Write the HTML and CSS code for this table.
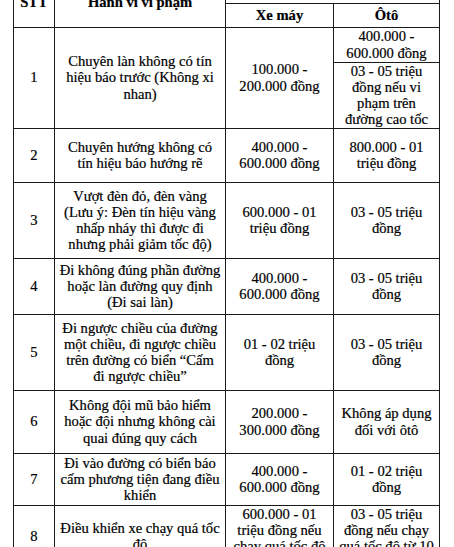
FILE: index.html
```html
<!DOCTYPE html>
<html lang="vi">
<head>
<meta charset="utf-8">
<link rel="stylesheet" href="styles.css">
</head>
<body>
<table class="fines">
  <colgroup>
    <col class="c-stt">
    <col class="c-act">
    <col class="c-moto">
    <col class="c-car">
  </colgroup>
  <thead>
    <tr class="h-a">
      <th rowspan="2">STT</th>
      <th rowspan="2">Hành vi vi phạm</th>
      <th colspan="2">Mức phạt</th>
    </tr>
    <tr class="h-b">
      <th>Xe máy</th>
      <th>Ôtô</th>
    </tr>
  </thead>
  <tbody>
    <tr class="r1a">
      <td rowspan="2">1</td>
      <td rowspan="2">Chuyên làn không có tín<br>hiệu báo trước (Không xi<br>nhan)</td>
      <td rowspan="2">100.000 -<br>200.000 đồng</td>
      <td>400.000 -<br>600.000 đồng</td>
    </tr>
    <tr class="r1b">
      <td>03 - 05 triệu<br>đồng nếu vi<br>phạm trên<br>đường cao tốc</td>
    </tr>
    <tr class="r2">
      <td>2</td>
      <td>Chuyên hướng không có<br>tín hiệu báo hướng rẽ</td>
      <td>400.000 -<br>600.000 đồng</td>
      <td>800.000 - 01<br>triệu đồng</td>
    </tr>
    <tr class="r3">
      <td>3</td>
      <td>Vượt đèn đỏ, đèn vàng<br>(Lưu ý: Đèn tín hiệu vàng<br>nhấp nháy thì được đi<br>nhưng phải giảm tốc độ)</td>
      <td>600.000 - 01<br>triệu đồng</td>
      <td>03 - 05 triệu<br>đồng</td>
    </tr>
    <tr class="r4">
      <td>4</td>
      <td>Đi không đúng phần đường<br>hoặc làn đường quy định<br>(Đi sai làn)</td>
      <td>400.000 -<br>600.000 đồng</td>
      <td>03 - 05 triệu<br>đồng</td>
    </tr>
    <tr class="r5">
      <td>5</td>
      <td>Đi ngược chiều của đường<br>một chiều, đi ngược chiều<br>trên đường có biển “Cấm<br>đi ngược chiều”</td>
      <td>01 - 02 triệu<br>đồng</td>
      <td>03 - 05 triệu<br>đồng</td>
    </tr>
    <tr class="r6">
      <td>6</td>
      <td>Không đội mũ bảo hiểm<br>hoặc đội nhưng không cài<br>quai đúng quy cách</td>
      <td>200.000 -<br>300.000 đồng</td>
      <td>Không áp dụng<br>đối với ôtô</td>
    </tr>
    <tr class="r7">
      <td>7</td>
      <td>Đi vào đường có biển báo<br>cấm phương tiện đang điều<br>khiển</td>
      <td>400.000 -<br>600.000 đồng</td>
      <td>01 - 02 triệu<br>đồng</td>
    </tr>
    <tr class="r8">
      <td class="lift">8</td>
      <td class="lift">Điều khiển xe chạy quá tốc<br>độ</td>
      <td class="top">600.000 - 01<br>triệu đồng nếu<br>chạy quá tốc độ<br>từ 10 - 20 km/h</td>
      <td class="top">03 - 05 triệu<br>đồng nếu chạy<br>quá tốc độ từ 10<br>- 20 km/h</td>
    </tr>
  </tbody>
</table>
</body>
</html>
```

FILE: styles.css
```css
html, body {
  margin: 0;
  padding: 0;
  background: #ffffff;
}

body {
  width: 454px;
  height: 547px;
  overflow: hidden;
}

.fines {
  margin: -23.5px 0 0 13px;
  width: 426px;
  border-collapse: collapse;
  table-layout: fixed;
  font-family: "Liberation Serif", "Times New Roman", serif;
  font-size: 14.6px;
  line-height: 16.2px;
  color: #000000;
  -webkit-text-stroke: 0.2px #000000;
}

.c-stt { width: 41px; }
.c-act { width: 171px; }
.c-moto { width: 108px; }
.c-car { width: 106px; }

.fines th,
.fines td {
  border: 1px solid #1a1a1a;
  padding: 0 2px;
  text-align: center;
  vertical-align: middle;
  white-space: nowrap;
}

.fines th {
  font-weight: bold;
}

.h-a { height: 26px; }
.h-b { height: 24px; }
.r1a { height: 35px; }
.r1b { height: 66px; }
.r2 { height: 54px; }
.r3 { height: 76px; }
.r4 { height: 56px; }
.r5 { height: 76px; }
.r6 { height: 63px; }
.r7 { height: 52px; }
.r8 { height: 72px; }

.fines td.lift {
  padding-bottom: 10px;
}

.fines td.top {
  vertical-align: top;
  padding-top: 0;
}
```
